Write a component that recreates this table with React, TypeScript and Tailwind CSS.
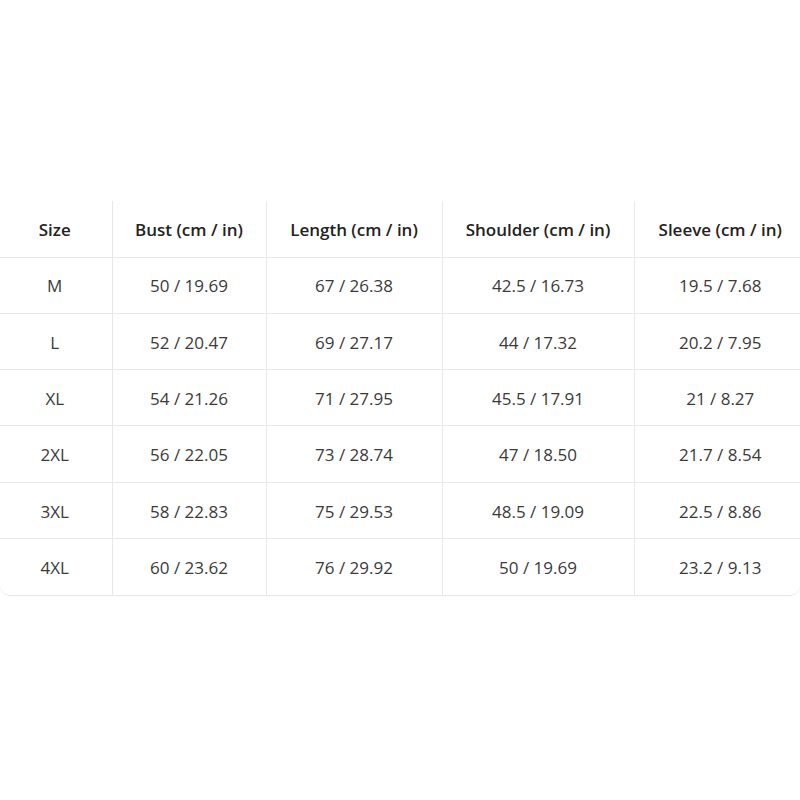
// Size chart table – header row plus six size rows, thin grey grid lines.

const headers = ['Size', 'Bust (cm / in)', 'Length (cm / in)', 'Shoulder (cm / in)', 'Sleeve (cm / in)'];

const rows: string[][] = [
  ['M', '50 / 19.69', '67 / 26.38', '42.5 / 16.73', '19.5 / 7.68'],
  ['L', '52 / 20.47', '69 / 27.17', '44 / 17.32', '20.2 / 7.95'],
  ['XL', '54 / 21.26', '71 / 27.95', '45.5 / 17.91', '21 / 8.27'],
  ['2XL', '56 / 22.05', '73 / 28.74', '47 / 18.50', '21.7 / 8.54'],
  ['3XL', '58 / 22.83', '75 / 29.53', '48.5 / 19.09', '22.5 / 8.86'],
  ['4XL', '60 / 23.62', '76 / 29.92', '50 / 19.69', '23.2 / 9.13'],
];

const widths = ['w-[112px]', 'w-[154px]', 'w-[176px]', 'w-[192px]', 'w-[166px]'];

export default function App() {
  return (
    <div className="h-[800px] w-[800px] bg-white pt-[201px] font-['Open_Sans','Noto_Sans',sans-serif]">
      <div className="w-[800px] overflow-hidden rounded-b-[10px] border-b border-[#e6e6e6]">
        <table className="w-full table-fixed border-collapse">
          <colgroup>
            {widths.map((w) => (
              <col key={w} className={w} />
            ))}
          </colgroup>
          <thead>
            <tr className="h-[56px] border-b border-[#e8e8e8]">
              {headers.map((h, i) => (
                <th
                  key={h}
                  className={`pt-[2px] text-center text-[17px] font-semibold text-[#222] ${i > 0 ? 'border-l border-[#e8e8e8]' : ''} ${i === 0 ? 'pr-[2px]' : ''} ${i === 4 ? 'pl-[6px]' : ''}`}
                >
                  {h}
                </th>
              ))}
            </tr>
          </thead>
          <tbody>
            {rows.map((r, ri) => (
              <tr
                key={r[0]}
                className={`h-[56.33px] ${ri < rows.length - 1 ? 'border-b border-[#e8e8e8]' : ''}`}
              >
                {r.map((c, i) => (
                  <td
                    key={i}
                    className={`pt-[2px] text-center text-[17px] text-[#3a3a3a] ${i > 0 ? 'border-l border-[#e8e8e8]' : ''} ${i === 0 ? 'pr-[2px]' : ''} ${i === 4 ? 'pl-[6px]' : ''}`}
                  >
                    {c}
                  </td>
                ))}
              </tr>
            ))}
          </tbody>
        </table>
      </div>
    </div>
  );
}
